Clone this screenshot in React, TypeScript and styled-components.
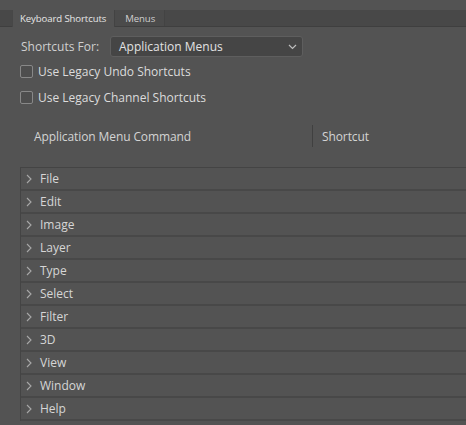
import styled, { createGlobalStyle } from 'styled-components';

const GlobalStyle = createGlobalStyle`
  html, body {
    margin: 0;
    padding: 0;
    background: #535353;
    overflow: hidden;
  }
  body {
    font-family: 'Open Sans', 'Noto Sans', 'DejaVu Sans', sans-serif;
    color: #d4d4d4;
  }
`;

const menus = ['File', 'Edit', 'Image', 'Layer', 'Type', 'Select', 'Filter', '3D', 'View', 'Window', 'Help'];

function Chevron() {
  return (
    <svg width="6" height="10" viewBox="0 0 6 10">
      <path d="M1 1 L5 5 L1 9" fill="none" stroke="#a8a8a8" strokeWidth="1.1" />
    </svg>
  );
}

export default function App() {
  return (
    <Page>
      <GlobalStyle />
      <TabBar>
        <Tab active>Keyboard Shortcuts</Tab>
        <Tab>Menus</Tab>
      </TabBar>

      <Options>
        <FieldRow>
          <FieldLabel>Shortcuts For:</FieldLabel>
          <Select>
            <span>Application Menus</span>
            <svg width="9" height="6" viewBox="0 0 9 6">
              <path d="M1 1 L4.5 4.5 L8 1" fill="none" stroke="#bdbdbd" strokeWidth="1.2" />
            </svg>
          </Select>
        </FieldRow>
        <CheckRow>
          <Checkbox />
          <CheckLabel>Use Legacy Undo Shortcuts</CheckLabel>
        </CheckRow>
        <CheckRow>
          <Checkbox />
          <CheckLabel>Use Legacy Channel Shortcuts</CheckLabel>
        </CheckRow>
      </Options>

      <HeaderRow>
        <HeaderCell width={278}>Application Menu Command</HeaderCell>
        <HeaderDivider />
        <HeaderCell>Shortcut</HeaderCell>
      </HeaderRow>

      <Table>
        {menus.map(m => (
          <MenuRow key={m}>
            <Chevron />
            <RowText>{m}</RowText>
          </MenuRow>
        ))}
      </Table>
    </Page>
  );
}

const Page = styled.div`
  width: 466px;
  height: 425px;
  display: flex;
  flex-direction: column;
  padding-top: 10px;
  box-sizing: border-box;
`;

const TabBar = styled.div`
  display: flex;
  height: 16px;
  padding-left: 12px;
  background: #484848;
  border-bottom: 1px solid #3f3f3f;
`;

const Tab = styled.div<{ active?: boolean }>`
  display: flex;
  align-items: center;
  padding: ${p => (p.active ? '0 8px 0 7px' : '0 9px')};
  font-size: 9.6px;
  letter-spacing: -0.1px;
  color: ${p => (p.active ? '#e6e6e6' : '#cfcfcf')};
  background: ${p => (p.active ? '#535353' : '#4b4b4b')};
  border-left: 1px solid ${p => (p.active ? '#474747' : 'transparent')};
  border-right: 1px solid #434343;
  margin-bottom: ${p => (p.active ? '-1px' : '0')};
`;

const Options = styled.div`
  display: flex;
  flex-direction: column;
  padding: 8px 0 0 20px;
`;

const FieldRow = styled.div`
  display: flex;
  align-items: center;
  gap: 11px;
  height: 23px;
`;

const FieldLabel = styled.span`
  font-size: 12px;
  color: #d0d0d0;
  margin-left: 1px;
`;

const Select = styled.div`
  width: 193px;
  height: 21px;
  box-sizing: border-box;
  display: flex;
  align-items: center;
  justify-content: space-between;
  padding: 0 5px 0 8px;
  background: #454545;
  border: 1px solid #5e5e5e;
  border-radius: 3px;
  font-size: 12px;
  color: #e2e2e2;
`;

const CheckRow = styled.div`
  display: flex;
  align-items: center;
  gap: 5px;
  height: 26px;
`;

const Checkbox = styled.div`
  width: 11px;
  height: 11px;
  border: 1px solid #888888;
  border-radius: 2px;
  background: #4e4e4e;
`;

const CheckLabel = styled.span`
  font-size: 12px;
  color: #dcdcdc;
`;

const HeaderRow = styled.div`
  display: flex;
  align-items: center;
  height: 24px;
  margin-top: 14px;
  padding-left: 34px;
`;

const HeaderCell = styled.div<{ width?: number }>`
  font-size: 12px;
  letter-spacing: -0.1px;
  color: #d4d4d4;
  width: ${p => (p.width ? `${p.width}px` : 'auto')};
`;

const HeaderDivider = styled.div`
  width: 1px;
  height: 22px;
  background: #404040;
  margin-right: 9px;
`;

const Table = styled.div`
  margin-top: 19px;
  margin-left: 20px;
  border-top: 1px solid #444444;
  border-left: 1px solid #444444;
  display: flex;
  flex-direction: column;
`;

const MenuRow = styled.div`
  display: flex;
  align-items: center;
  gap: 8px;
  height: 21px;
  padding-left: 5px;
  border-bottom: 2px solid #484848;
`;

const RowText = styled.span`
  font-size: 12px;
  color: #d6d6d6;
`;
